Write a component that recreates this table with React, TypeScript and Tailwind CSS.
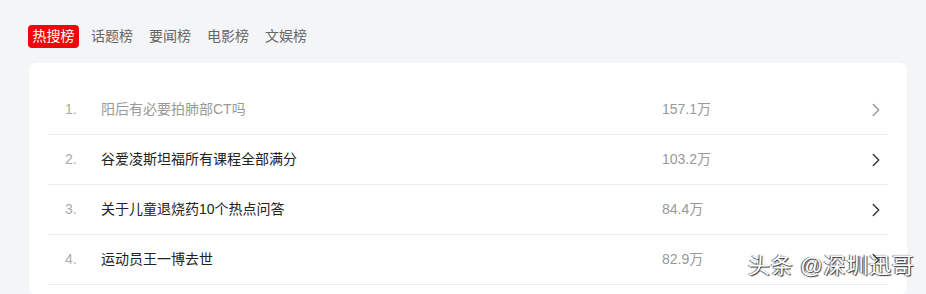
import { ChevronRight } from "lucide-react";

interface HotItem {
  rank: number;
  title: string;
  heat: string;
  visited?: boolean;
}

const tabs = ["热搜榜", "话题榜", "要闻榜", "电影榜", "文娱榜"];

const items: HotItem[] = [
  { rank: 1, title: "阳后有必要拍肺部CT吗", heat: "157.1万", visited: true },
  { rank: 2, title: "谷爱凌斯坦福所有课程全部满分", heat: "103.2万" },
  { rank: 3, title: "关于儿童退烧药10个热点问答", heat: "84.4万" },
  { rank: 4, title: "运动员王一博去世", heat: "82.9万" },
];

function HotRow({ item }: { item: HotItem }) {
  return (
    <div className="h-[50px] flex items-center border-b border-[#ececec] pl-[17px] pr-[1px]">
      <span className="w-[36px] text-[#aaaaaa]">{item.rank}.</span>
      <span
        className={`flex-1 truncate ${item.visited ? "text-[#999999]" : "text-[#222222]"}`}
      >
        {item.title}
      </span>
      <span className="w-[203px] text-[#999999]">{item.heat}</span>
      <ChevronRight
        className={`w-[22px] h-[22px] ${item.visited ? "text-[#999999]" : "text-[#333333]"}`}
        strokeWidth={1.5}
      />
    </div>
  );
}

export default function App() {
  return (
    <div
      className="relative w-[926px] h-[294px] overflow-hidden bg-[#f4f5f7] text-[14px]"
      style={{ fontFamily: '"Liberation Sans", "Noto Sans CJK SC", sans-serif' }}
    >
      <div className="flex items-center gap-[16px] pl-[28px] pt-[25px]">
        {tabs.map((tab, i) =>
          i === 0 ? (
            <span
              key={tab}
              className="h-[23px] w-[51px] mr-[-4px] flex items-center justify-center rounded-[4px] bg-[#f0060b] text-white"
            >
              {tab}
            </span>
          ) : (
            <span key={tab} className="h-[23px] flex items-center text-[#666666]">
              {tab}
            </span>
          )
        )}
      </div>

      <div className="ml-[29px] mr-[19px] mt-[15px] rounded-[8px] bg-white px-[19px] pt-[22px] pb-[10px]">
        {items.map((item) => (
          <HotRow key={item.rank} item={item} />
        ))}
      </div>

      {/* watermark */}
      <div
        className="absolute left-[748px] top-[249px] text-[22px] text-white tracking-[0.75px]"
        style={{ textShadow: "1px 1px 1px #333, -1px 0 1px #555" }}
      >
        头条 @深圳迅哥
      </div>
    </div>
  );
}
